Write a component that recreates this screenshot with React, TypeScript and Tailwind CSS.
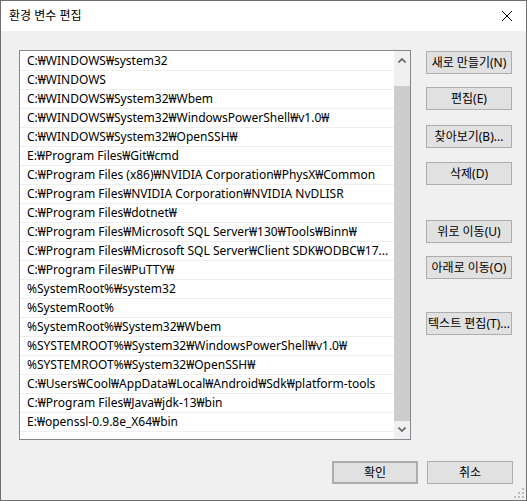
const paths = [
  "C:₩WINDOWS₩system32",
  "C:₩WINDOWS",
  "C:₩WINDOWS₩System32₩Wbem",
  "C:₩WINDOWS₩System32₩WindowsPowerShell₩v1.0₩",
  "C:₩WINDOWS₩System32₩OpenSSH₩",
  "E:₩Program Files₩Git₩cmd",
  "C:₩Program Files (x86)₩NVIDIA Corporation₩PhysX₩Common",
  "C:₩Program Files₩NVIDIA Corporation₩NVIDIA NvDLISR",
  "C:₩Program Files₩dotnet₩",
  "C:₩Program Files₩Microsoft SQL Server₩130₩Tools₩Binn₩",
  "C:₩Program Files₩Microsoft SQL Server₩Client SDK₩ODBC₩17...",
  "C:₩Program Files₩PuTTY₩",
  "%SystemRoot%₩system32",
  "%SystemRoot%",
  "%SystemRoot%₩System32₩Wbem",
  "%SYSTEMROOT%₩System32₩WindowsPowerShell₩v1.0₩",
  "%SYSTEMROOT%₩System32₩OpenSSH₩",
  "C:₩Users₩Cool₩AppData₩Local₩Android₩Sdk₩platform-tools",
  "C:₩Program Files₩Java₩jdk-13₩bin",
  "E:₩openssl-0.9.8e_X64₩bin",
];

function Btn({ label, className = "" }: { label: string; className?: string }) {
  return (
    <button
      className={`h-[23px] w-[86px] border border-[#adadad] bg-[#e1e1e1] text-[12px] leading-none text-black whitespace-nowrap ${className}`}
    >
      {label}
    </button>
  );
}

function Chevron({ up }: { up?: boolean }) {
  return (
    <svg width="8" height="5" viewBox="0 0 8 5" className="block">
      <path
        d={up ? "M0.5 4.5 L4 1 L7.5 4.5" : "M0.5 0.5 L4 4 L7.5 0.5"}
        fill="none"
        stroke="#606060"
        strokeWidth="1.6"
      />
    </svg>
  );
}

export default function App() {
  return (
    <div
      className="w-[527px] h-[501px] border border-[#6e6e6e] bg-[#f0f0f0] flex flex-col text-black"
      style={{ fontFamily: '"Noto Sans", "Noto Sans CJK KR", sans-serif' }}
    >
      {/* Title bar */}
      <div className="h-[30px] bg-white flex items-center justify-between pl-[8px] pr-[14px] shrink-0">
        <span className="text-[12px]">환경 변수 편집</span>
        <svg width="10" height="10" viewBox="0 0 10 10" className="block">
          <path d="M0 0 L10 10 M10 0 L0 10" stroke="#000" strokeWidth="1" />
        </svg>
      </div>

      <div className="flex-1 flex flex-col pl-[18px] pt-[19px] relative">
        <div className="flex gap-[15px]">
          {/* List */}
          <div className="w-[392px] h-[390px] border border-[#828790] bg-white flex">
            <div className="flex-1 pt-[1px] overflow-hidden">
              {paths.map((p) => (
                <div
                  key={p}
                  className="h-[19px] border-b border-[#efefef] pl-[7px] text-[12px] leading-[18px] whitespace-nowrap overflow-hidden"
                >
                  {p}
                </div>
              ))}
            </div>
            {/* Scrollbar */}
            <div className="w-[16px] bg-[#f0f0f0] flex flex-col">
              <div className="h-[17px] flex items-center justify-center pt-[2px]">
                <Chevron up />
              </div>
              <div className="h-[18px]" />
              <div className="h-[335px] bg-[#cdcdcd]" />
              <div className="h-[17px] flex items-center justify-center">
                <Chevron />
              </div>
            </div>
          </div>

          {/* Side buttons */}
          <div className="flex flex-col pt-[1px]">
            <Btn label="새로 만들기(N)" />
            <Btn label="편집(E)" className="mt-[13px]" />
            <Btn label="찾아보기(B)..." className="mt-[15px]" />
            <Btn label="삭제(D)" className="mt-[14px]" />
            <Btn label="위로 이동(U)" className="mt-[35px]" />
            <Btn label="아래로 이동(O)" className="mt-[13px]" />
            <Btn label="텍스트 편집(T)..." className="mt-[33px]" />
          </div>
        </div>

        {/* Footer buttons */}
        <div className="flex justify-end gap-[9px] pr-[13px] mt-[21px]">
          <Btn label="확인" className="border-2 border-[#0078d7]" />
          <Btn label="취소" />
        </div>

        {/* Resize grip */}
        <svg width="10" height="10" viewBox="0 0 10 10" className="absolute right-[2px] bottom-[2px]">
          <rect x="8" y="0" width="2" height="2" fill="#bcbcbc" />
          <rect x="4" y="4" width="2" height="2" fill="#bcbcbc" />
          <rect x="8" y="4" width="2" height="2" fill="#bcbcbc" />
          <rect x="0" y="8" width="2" height="2" fill="#bcbcbc" />
          <rect x="4" y="8" width="2" height="2" fill="#bcbcbc" />
          <rect x="8" y="8" width="2" height="2" fill="#bcbcbc" />
        </svg>
      </div>
    </div>
  );
}
